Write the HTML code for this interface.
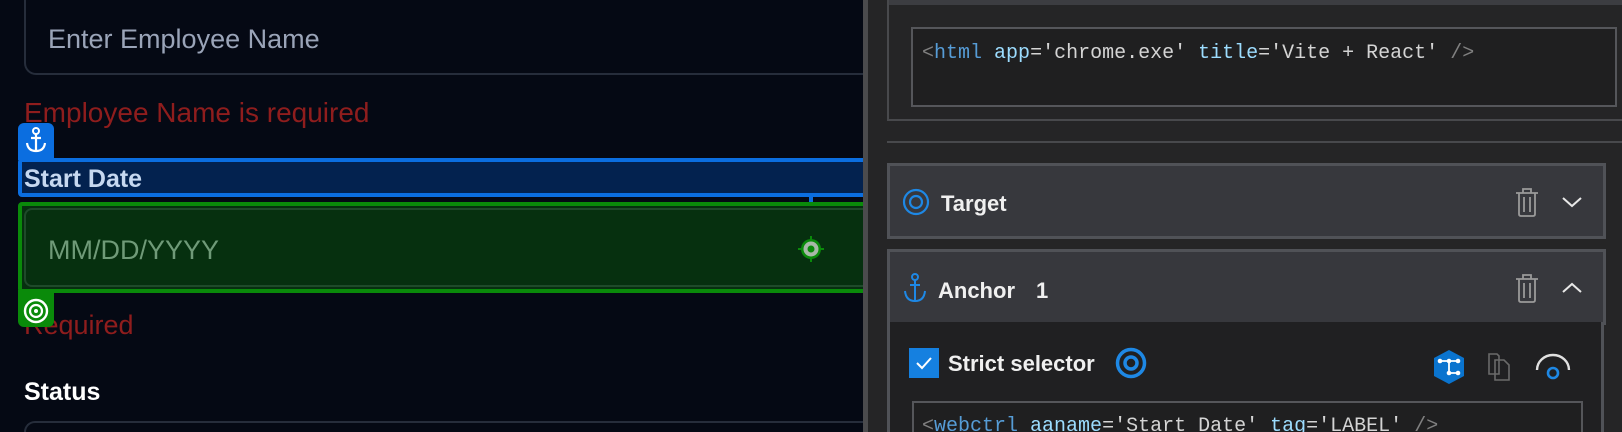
<!DOCTYPE html>
<html><head><meta charset="utf-8"><style>
*{margin:0;padding:0;box-sizing:border-box}
html,body{width:1622px;height:432px;overflow:hidden}
body{background:#050914;font-family:"Liberation Sans",sans-serif;position:relative}
.a{position:absolute}
.mono{font-family:"Liberation Mono",monospace;font-size:20px;white-space:pre;color:#d4d4d4}
.tag{color:#569cd6}.attr{color:#9cdcfe}.pun{color:#808080}
</style></head><body>
<!-- left pane -->
<div class="a" style="left:24px;top:0;width:839px;height:75px;border:2px solid #262d3b;border-top:none;border-right:none;border-radius:0 0 0 12px"></div>
<div class="a" style="left:48px;top:24px;font-size:27px;color:#9aa4b8">Enter Employee Name</div>
<div class="a" style="left:24px;top:97px;font-size:28px;color:#8f1d1d">Employee Name is required</div>

<div class="a" style="left:18px;top:158px;width:860px;height:39px;background:#03224f;border:4px solid #0b6ee0;border-radius:4px"></div>
<div class="a" style="left:18px;top:123px;width:36px;height:37px;background:#0b6ee0;border-radius:6px 6px 0 0"></div>
<svg class="a" style="left:24px;top:126px" width="24" height="28" viewBox="0 0 24 28"><circle cx="12" cy="5" r="3" fill="none" stroke="#fff" stroke-width="2"/><path d="M12 8V25M7 12H17M3 17Q4 25 12 25Q20 25 21 17" fill="none" stroke="#fff" stroke-width="2.2"/></svg>
<div class="a" style="left:24px;top:165px;font-size:25px;font-weight:bold;color:#c6d8f0">Start Date</div>
<div class="a" style="left:809px;top:196px;width:4px;height:7px;background:#0b6ee0"></div>

<div class="a" style="left:18px;top:202px;width:860px;height:91px;background:#06300f;border:4px solid #0a8a0a;border-radius:4px"></div>
<div class="a" style="left:24px;top:208px;width:860px;height:79px;border:2px solid #1f4a2a;border-radius:8px"></div>
<div class="a" style="left:48px;top:235px;font-size:27px;color:#6f9a78">MM/DD/YYYY</div>
<svg class="a" style="left:797px;top:235px" width="28" height="28" viewBox="0 0 28 28"><path d="M14 1V27M1 14H27" stroke="#0a8a0a" stroke-width="2"/><circle cx="14" cy="14" r="10" fill="#0a8a0a"/><circle cx="14" cy="14" r="7.5" fill="#a8b8a8"/><circle cx="14" cy="14" r="3.5" fill="#0a8a0a"/></svg>
<div class="a" style="left:24px;top:310px;font-size:27px;color:#8f1d1d;">Required</div>
<div class="a" style="left:18px;top:290px;width:36px;height:37px;background:#0a8a0a;border-radius:0 0 6px 6px"></div>
<svg class="a" style="left:23px;top:298px" width="26" height="26" viewBox="0 0 26 26"><circle cx="13" cy="13" r="11" fill="none" stroke="#fff" stroke-width="2.4"/><circle cx="13" cy="13" r="6" fill="none" stroke="#fff" stroke-width="2.2"/><circle cx="13" cy="13" r="2" fill="#fff"/></svg>
<div class="a" style="left:24px;top:378px;font-size:25px;font-weight:bold;color:#fff">Status</div>
<div class="a" style="left:24px;top:421px;width:839px;height:11px;border:2px solid #262d3b;border-bottom:none;border-right:none;border-radius:12px 0 0 0"></div>

<!-- divider + right panel -->
<div class="a" style="left:863px;top:0;width:5px;height:432px;background:#4b4b4d"></div>
<div class="a" style="left:868px;top:0;width:754px;height:432px;background:#252526"></div>
<div class="a" style="left:887px;top:0;width:735px;height:5px;background:#3c3d41"></div>
<div class="a" style="left:887px;top:0;width:735px;height:121px;border:2px solid #48494c;border-top:none;border-right:none"></div>
<div class="a" style="left:911px;top:27px;width:706px;height:80px;border:2px solid #55565a;background:#1f1f20"></div>
<div class="a mono" style="left:922px;top:42px"><span class="pun">&lt;</span><span class="tag">html</span> <span class="attr">app</span>=<span>'chrome.exe'</span> <span class="attr">title</span>=<span>'Vite + React'</span> <span class="pun">/&gt;</span></div>
<div class="a" style="left:887px;top:141px;width:735px;height:2px;background:#48494c"></div>

<!-- Target -->
<div class="a" style="left:887px;top:163px;width:719px;height:76px;background:#37383d;border:3px solid #505257"></div>
<svg class="a" style="left:902px;top:188px" width="28" height="28" viewBox="0 0 28 28"><circle cx="14" cy="14" r="12" fill="none" stroke="#1e88e5" stroke-width="2.2"/><circle cx="14" cy="14" r="6" fill="none" stroke="#1e88e5" stroke-width="2.2"/></svg>
<div class="a" style="left:941px;top:191px;font-size:22px;font-weight:bold;color:#f0f0f0">Target</div>
<svg class="a" style="left:1513px;top:186px" width="28" height="32" viewBox="0 0 28 32"><path d="M3 7H25M10 7V3H18V7M6 7V28Q6 30 8 30H20Q22 30 22 28V7M11 11V26M17 11V26" fill="none" stroke="#9a9a9a" stroke-width="1.8"/></svg>
<svg class="a" style="left:1560px;top:192px" width="24" height="20" viewBox="0 0 24 20"><path d="M3 6L12 14L21 6" fill="none" stroke="#e8e8e8" stroke-width="2"/></svg>

<!-- Anchor -->
<div class="a" style="left:887px;top:249px;width:719px;height:76px;background:#37383d;border:3px solid #505257"></div>
<div class="a" style="left:887px;top:322px;width:717px;height:110px;background:#202022;border:3px solid #505257;border-top:none;border-bottom:none"></div>
<svg class="a" style="left:902px;top:272px" width="26" height="32" viewBox="0 0 26 32"><circle cx="13" cy="5" r="3" fill="none" stroke="#1e88e5" stroke-width="2"/><path d="M13 8V29M8 13H18M3 19Q4 29 13 29Q22 29 23 19" fill="none" stroke="#1e88e5" stroke-width="2"/></svg>
<div class="a" style="left:938px;top:278px;font-size:22px;font-weight:bold;color:#f0f0f0">Anchor</div>
<div class="a" style="left:1036px;top:278px;font-size:22px;font-weight:bold;color:#f0f0f0">1</div>
<svg class="a" style="left:1513px;top:272px" width="28" height="32" viewBox="0 0 28 32"><path d="M3 7H25M10 7V3H18V7M6 7V28Q6 30 8 30H20Q22 30 22 28V7M11 11V26M17 11V26" fill="none" stroke="#9a9a9a" stroke-width="1.8"/></svg>
<svg class="a" style="left:1560px;top:278px" width="24" height="20" viewBox="0 0 24 20"><path d="M3 14L12 6L21 14" fill="none" stroke="#e8e8e8" stroke-width="2"/></svg>

<div class="a" style="left:909px;top:348px;width:30px;height:30px;background:#1580e0"></div>
<svg class="a" style="left:909px;top:348px" width="30" height="30" viewBox="0 0 30 30"><path d="M8 15L13 20L22 10" fill="none" stroke="#fff" stroke-width="2"/></svg>
<div class="a" style="left:948px;top:351px;font-size:22px;font-weight:bold;color:#f0f0f0">Strict selector</div>
<svg class="a" style="left:1115px;top:347px" width="32" height="32" viewBox="0 0 32 32"><circle cx="16" cy="16" r="13.5" fill="none" stroke="#1e88e5" stroke-width="3.5"/><circle cx="16" cy="16" r="6" fill="none" stroke="#1e88e5" stroke-width="3.5"/></svg>
<svg class="a" style="left:1432px;top:349px" width="34" height="36" viewBox="0 0 34 36"><path d="M17 1L32 9V27L17 35L2 27V9Z" fill="#0a74cf"/><path d="M8 12H26M17 12V24M17 24H26" stroke="#fff" stroke-width="1.8"/><circle cx="8" cy="12" r="2.3" fill="#fff"/><circle cx="17" cy="12" r="2.3" fill="#fff"/><circle cx="26" cy="12" r="2.3" fill="#fff"/><circle cx="17" cy="24" r="2.3" fill="#fff"/><circle cx="26" cy="24" r="2.3" fill="#fff"/></svg>
<svg class="a" style="left:1487px;top:352px" width="28" height="30" viewBox="0 0 28 30"><path d="M2 2H10L12 4V22H2Z" fill="none" stroke="#6a6a6a" stroke-width="1.6"/><path d="M8 8H17L22 13V28H8Z" fill="none" stroke="#6a6a6a" stroke-width="1.6"/></svg>
<svg class="a" style="left:1533px;top:350px" width="40" height="30" viewBox="0 0 40 30"><path d="M4 20A16 15 0 0 1 36 20" fill="none" stroke="#e0e0e0" stroke-width="2.4"/><circle cx="20" cy="23" r="5" fill="none" stroke="#1e88e5" stroke-width="2.6"/></svg>

<div class="a" style="left:912px;top:401px;width:671px;height:31px;border:2px solid #55565a;border-bottom:none;background:#1f1f20;overflow:hidden"><div class="mono" style="position:absolute;left:8px;top:12px"><span class="pun">&lt;</span><span class="tag">webctrl</span> <span class="attr">aaname</span>=<span>'Start Date'</span> <span class="attr">tag</span>=<span>'LABEL'</span> <span class="pun">/&gt;</span></div></div>
</body></html>
